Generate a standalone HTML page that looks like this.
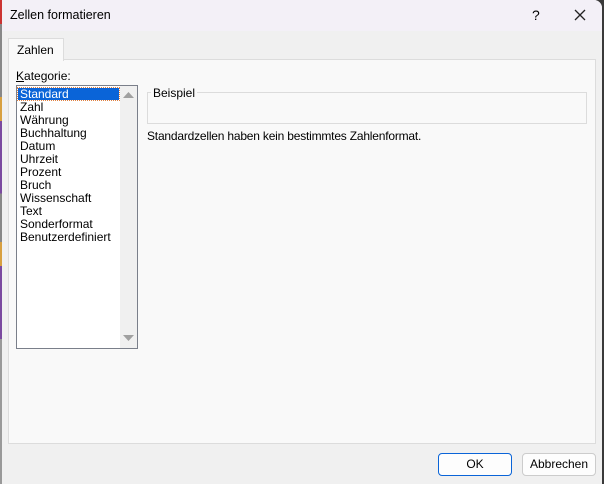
<!DOCTYPE html><html><head><style>
body{margin:0;width:604px;height:484px;background:#3a3a3a;position:relative;overflow:hidden;font-family:"Liberation Sans",sans-serif;color:#000}
.strip{position:absolute;left:0;top:0;width:3px;height:484px;background:linear-gradient(#c33 0 5%,#888 5% 20%,#d8a040 20% 25%,#7b4aa0 25% 40%,#888 40% 50%,#d8a040 50% 55%,#7b4aa0 55% 70%,#999 70%)}
.dlg{position:absolute;left:2px;top:0;width:600px;height:484px;background:#f0f0f0;border-radius:0 8px 0 0;overflow:hidden}
.title{position:absolute;left:0;top:0;width:600px;height:31px;background:#f3f0f7}
.abs{position:absolute}
.t{font-size:12px;white-space:nowrap}
.panel{position:absolute;left:6px;top:59px;width:586px;height:383px;background:#f9f9f9;border:1px solid #dcdcdc}
.tab{position:absolute;left:6px;top:38px;width:54px;height:22px;background:#f9f9f9;border:1px solid #dcdcdc;border-bottom:none}
.list{position:absolute;left:14px;top:85px;width:120px;height:262px;background:#fff;border:1px solid #7a7f8a}
.sb{position:absolute;right:0;top:0;width:17px;height:262px;background:#f0f0f0}
.item{position:absolute;left:3px;font-size:12px;line-height:13px}
.btn{position:absolute;top:453px;height:21px;border:1px solid #ccc;border-radius:4px;background:#fdfdfd;font-size:12px;text-align:center;line-height:21px}
</style></head><body>
<div class="strip"></div>
<div class="dlg">
<div class="title"></div>
<div class="abs t" style="left:8px;top:8px;font-size:12.5px">Zellen formatieren</div>
<div class="abs t" style="left:530px;top:7px;font-size:14px">?</div>
<svg class="abs" style="left:572px;top:9px" width="12" height="12"><path d="M1 1L11 11M11 1L1 11" stroke="#222" stroke-width="1.3"/></svg>
<div class="panel"></div>
<div class="tab"></div>
<div class="abs t" style="left:15px;top:43px">Zahlen</div>
<div class="abs t" style="left:14px;top:69px"><u>K</u>ategorie:</div>
<div class="list">
<div class="abs" style="left:1px;top:2px;width:101px;height:12px;background:#0a64d8;outline:1px dotted #e08040"></div>
<div class="item" style="top:2px;color:#fff">Standard</div>
<div class="item" style="top:15px">Zahl</div>
<div class="item" style="top:28px">Währung</div>
<div class="item" style="top:41px">Buchhaltung</div>
<div class="item" style="top:54px">Datum</div>
<div class="item" style="top:67px">Uhrzeit</div>
<div class="item" style="top:80px">Prozent</div>
<div class="item" style="top:93px">Bruch</div>
<div class="item" style="top:106px">Wissenschaft</div>
<div class="item" style="top:119px">Text</div>
<div class="item" style="top:132px">Sonderformat</div>
<div class="item" style="top:145px">Benutzerdefiniert</div>
<div class="sb">
<svg class="abs" style="left:3px;top:6px" width="11" height="7"><path d="M0 6L5.5 0L11 6Z" fill="#a0a0a0"/></svg>
<svg class="abs" style="left:3px;top:249px" width="11" height="7"><path d="M0 0L5.5 6L11 0Z" fill="#a0a0a0"/></svg>
</div></div>
<div class="abs" style="left:145px;top:92px;width:438px;height:30px;border:1px solid #dcdcdc"></div>
<div class="abs t" style="left:149px;top:86px;background:#f9f9f9;padding:0 2px">Beispiel</div>
<div class="abs t" style="left:145px;top:129px;letter-spacing:-0.2px">Standardzellen haben kein bestimmtes Zahlenformat.</div>
<div class="btn" style="left:436px;width:72px;border:1px solid #0a64d8">OK</div>
<div class="btn" style="left:520px;width:72px">Abbrechen</div>
</div>
</body></html>
